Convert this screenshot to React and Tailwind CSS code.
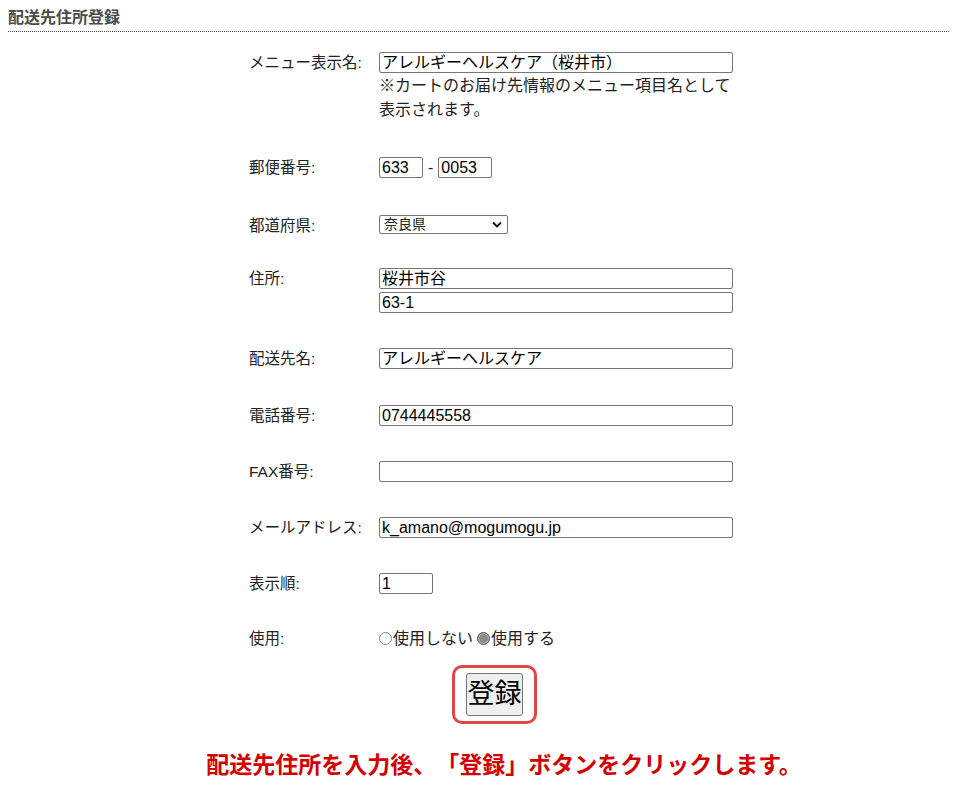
import React from 'react';

const font = { fontFamily: '"Liberation Sans", "Noto Sans CJK JP", sans-serif' };

const Field = ({ value = '', className = 'w-[354px]' }) => (
  <input
    readOnly
    value={value}
    className={`h-[21px] border border-[#767676] rounded-[2px] px-[2px] text-[16px] text-black bg-white outline-none ${className}`}
  />
);

const Row = ({ label, className = '', children }) => (
  <div className={`flex items-start ${className}`}>
    <div className="w-[130px] shrink-0 text-[15.5px] leading-[21px] text-[#222]">{label}</div>
    <div className="flex flex-col">{children}</div>
  </div>
);

const Radio = ({ checked }) => (
  <span
    className={`inline-block w-[13px] h-[13px] rounded-full border ${
      checked ? 'bg-[#8a8a8a] border-[#555] shadow-[inset_0_0_0_1px_#bbb]' : 'bg-white border-[#888]'
    }`}
  />
);

export default function App() {
  return (
    <div className="w-[957px] min-h-[801px] bg-white text-[#222]" style={font}>
      <div className="mx-[8px] pt-[7px] pb-[3px] border-b border-dotted border-[#444]">
        <h2 className="text-[16px] font-bold leading-[21px] text-[#4a4a4a]">配送先住所登録</h2>
      </div>

      <div className="ml-[249px]">
        <Row label="メニュー表示名:" className="mt-[20px]">
          <Field value="アレルギーヘルスケア（桜井市）" />
          <p className="text-[16px] leading-[24px] mt-[1px]">
            ※カートのお届け先情報のメニュー項目名として
            <br />
            表示されます。
          </p>
        </Row>

        <Row label="郵便番号:" className="mt-[35px]">
          <div className="flex items-center text-[16px] leading-[21px]">
            <Field value="633" className="w-[44px]" />
            <span className="mx-[5px]">-</span>
            <Field value="0053" className="w-[54px]" />
          </div>
        </Row>

        <Row label="都道府県:" className="mt-[37px]">
          <div className="relative w-[129px] h-[19px] border border-[#767676] rounded-[2px] bg-white text-[14px] leading-[17px] pl-[4px]">
            奈良県
            <svg className="absolute right-[5px] top-[5px]" width="10" height="7" viewBox="0 0 10 7">
              <path d="M1 1.5 L5 5.5 L9 1.5" fill="none" stroke="#111" strokeWidth="1.8" />
            </svg>
          </div>
        </Row>

        <Row label="住所:" className="mt-[32px]">
          <Field value="桜井市谷" />
          <Field value="63-1" className="w-[354px] mt-[3px]" />
        </Row>

        <Row label="配送先名:" className="mt-[35px]">
          <Field value="アレルギーヘルスケア" />
        </Row>

        <Row label="電話番号:" className="mt-[36px]">
          <Field value="0744445558" />
        </Row>

        <Row label="FAX番号:" className="mt-[35px]">
          <Field />
        </Row>

        <Row label="メールアドレス:" className="mt-[35px]">
          <Field value="k_amano@mogumogu.jp" />
        </Row>

        <Row label="表示順:" className="mt-[35px]">
          <Field value="1" className="w-[54px]" />
        </Row>

        <Row label="使用:" className="mt-[34px]">
          <div className="flex items-center text-[16px] leading-[21px]">
            <Radio />
            <span className="ml-[1px]">使用しない</span>
            <span className="ml-[4px]" />
            <Radio checked />
            <span className="ml-[1px]">使用する</span>
          </div>
        </Row>
      </div>

      <div className="flex justify-center mt-[16px] pl-[32px]">
        <div className="border-[3px] border-[#e04848] rounded-[10px] px-[11px] pt-[5px] pb-[5px]">
          <button className="w-[57px] h-[43px] bg-[#efefef] border border-[#767676] rounded-[3px] text-[27px] leading-none text-black">
            登録
          </button>
        </div>
      </div>

      <p className="mt-[26px] text-center pl-[51px] text-[23px] font-bold text-[#d40000] leading-[30px] [text-spacing-trim:space-all]">
        配送先住所を入力後、「登録」ボタンをクリックします。
      </p>
    </div>
  );
}
